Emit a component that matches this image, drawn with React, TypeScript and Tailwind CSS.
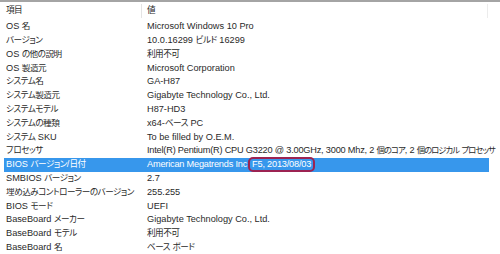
const ROWS: [string, string][] = [
  ["OS 名", "Microsoft Windows 10 Pro"],
  ["バージョン", "10.0.16299 ビルド 16299"],
  ["OS の他の説明", "利用不可"],
  ["OS 製造元", "Microsoft Corporation"],
  ["システム名", "GA-H87"],
  ["システム製造元", "Gigabyte Technology Co., Ltd."],
  ["システムモデル", "H87-HD3"],
  ["システムの種類", "x64-ベース PC"],
  ["システム SKU", "To be filled by O.E.M."],
  ["プロセッサ", "Intel(R) Pentium(R) CPU G3220 @ 3.00GHz, 3000 Mhz, 2 個のコア, 2 個のロジカル プロセッサ"],
  ["BIOS バージョン/日付", ""],
  ["SMBIOS バージョン", "2.7"],
  ["埋め込みコントローラーのバージョン", "255.255"],
  ["BIOS モード", "UEFI"],
  ["BaseBoard メーカー", "Gigabyte Technology Co., Ltd."],
  ["BaseBoard モデル", "利用不可"],
  ["BaseBoard 名", "ベース ボード"],
];

// Japanese runs get a smaller, tighter face so they sit like Meiryo UI next to the latin text.
function Jp({ text, tight }: { text: string; tight?: boolean }) {
  const parts = text.split(/([\u3000-\u30ff\u4e00-\u9fff]+)/);
  return (
    <>
      {parts.map((p, i) =>
        i % 2 === 1 ? (
          <span key={i} className={tight ? "text-[8.4px] tracking-[-1px]" : "text-[8.6px] tracking-[-0.5px]"}>
            {p}
          </span>
        ) : (
          <span key={i}>{p}</span>
        ),
      )}
    </>
  );
}

export default function App() {
  return (
    <div
      className="h-[254px] w-[500px] overflow-hidden border-t-2 border-[#a4a4a4] bg-white text-[9.2px] leading-none text-[#2a2a2a] [font-feature-settings:'palt']"
      style={{ fontFamily: '"Liberation Sans", "Noto Sans CJK JP", sans-serif' }}
    >
      {/* header */}
      <div className="flex h-[18px] items-center">
        <div className="w-[141px] shrink-0 pl-[6px]">
          <Jp text="項目" />
        </div>
        <div className="h-[14px] w-px bg-[#e4e4e4]" />
        <div className="flex-1 pl-[5px]">
          <Jp text="値" />
        </div>
        <div className="mr-[12px] h-[14px] w-px bg-[#ececec]" />
      </div>

      {ROWS.map(([k, v]) => {
        const selected = k.startsWith("BIOS バージョン");
        const long = v.length > 60;
        return (
          <div
            key={k}
            className={[
              "flex h-[13.8px] items-center whitespace-nowrap",
              selected ? "ml-[4px] mr-[11px] bg-[#3797ec] text-white" : "",
            ].join(" ")}
          >
            <div className={selected ? "w-[138px] shrink-0 pl-[2px]" : "w-[142px] shrink-0 overflow-hidden pl-[6px]"}>
              <Jp text={k} />
            </div>
            <div className={long ? "pl-[5px] tracking-[-0.2px]" : "pl-[5px]"}>
              {selected ? (
                <span className="flex items-center tracking-[-0.2px]">
                  American Megatrends Inc
                  <span className="relative ml-[1px] rounded-[5px] border-2 border-[#9c2352] px-[2px] py-[1px]">
                    F5, 2013/08/03
                  </span>
                </span>
              ) : (
                <Jp text={v} tight={long} />
              )}
            </div>
          </div>
        );
      })}
    </div>
  );
}
